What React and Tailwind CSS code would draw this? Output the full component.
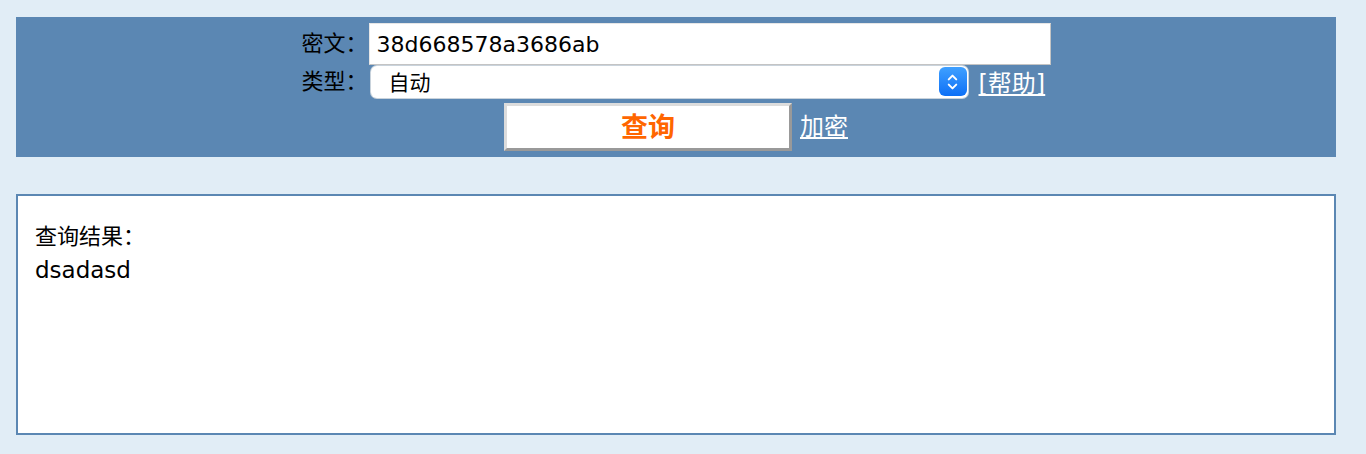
import { ChevronUp, ChevronDown } from 'lucide-react';

const font = "font-['DejaVu_Sans','Noto_Sans_CJK_SC',sans-serif]";

const App = () => {
  return (
    <div className={`min-h-[454px] bg-[#e1edf6] pl-4 pr-[30px] pt-[17px] pb-[19px] ${font} text-black`}>
      {/* Query panel */}
      <div className="bg-[#5b87b3] h-[140px] pt-[6px]">
        <div className="grid grid-cols-[auto_682px] justify-center items-center">
          <div className="text-[22px] text-right pr-[1px] leading-none">密文：</div>
          <div className="h-[42px] bg-white border border-[#c4c4c4] border-t-[#e6e6e6] border-l-[#e6e6e6] flex items-center pl-[7px] text-[22px]">
            38d668578a3686ab
          </div>

          <div className="text-[22px] text-right pr-[1px] leading-none">类型：</div>
          <div className="flex items-center h-[33px] pl-[2px]">
            <div className="w-[597px] h-[32px] bg-white rounded-[6px] shadow-[0_0_0_1px_#c9d3dc] flex items-center justify-between pl-[18px] pr-[1px]">
              <span className="text-[21px] leading-none pt-[3px]">自动</span>
              <span className="w-[28px] h-[29px] rounded-[6px] bg-gradient-to-b from-[#3fa0ff] to-[#0b6ff6] flex flex-col items-center justify-center text-white">
                <ChevronUp size={15} strokeWidth={3.2} className="-mb-[3px]" />
                <ChevronDown size={15} strokeWidth={3.2} className="-mt-[3px]" />
              </span>
            </div>
            <a href="#" className="ml-[11px] text-white underline [text-decoration-skip-ink:none] text-[24px] leading-none pt-[4px]">[帮助]</a>
          </div>

          <div className="col-span-2 flex justify-center items-center pt-[5px]">
            <button className="w-[288px] h-[48px] bg-white border-[3px] border-t-[#dcdcdc] border-l-[#dcdcdc] border-b-[#999999] border-r-[#999999] text-[#ff6600] font-bold text-[27px] leading-none">
              查询
            </button>
            <a href="#" className="ml-[8px] text-white underline [text-decoration-skip-ink:none] text-[24px] leading-none">加密</a>
          </div>
        </div>
      </div>

      {/* Result */}
      <div className="mt-[37px] h-[241px] bg-white border-2 border-[#5b87b3] pl-[17px] pt-[22px]">
        <div className="text-[22px] leading-[38px]">查询结果：</div>
        <div className="text-[23px] leading-[28px]">dsadasd</div>
      </div>
    </div>
  );
};

export default App;
